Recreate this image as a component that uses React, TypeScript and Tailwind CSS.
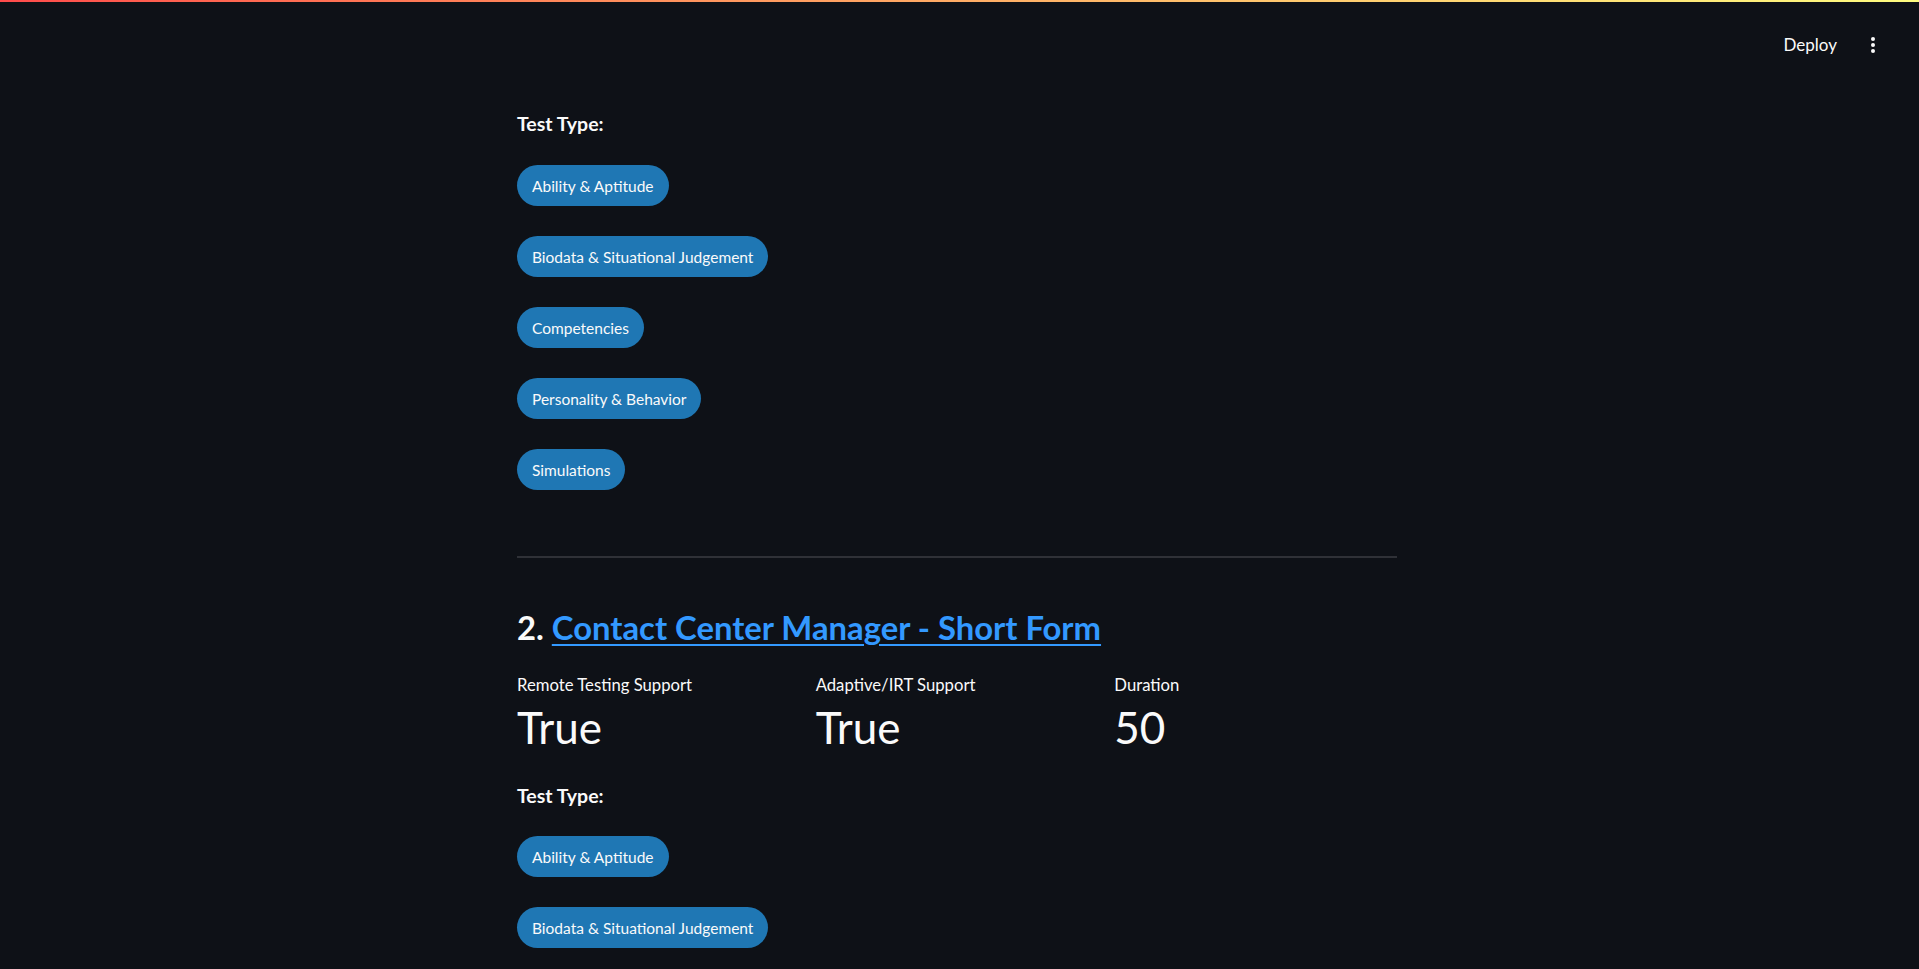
import React from "react";

const font = { fontFamily: "Lato, 'Noto Sans', sans-serif" };

function Pill({ label }: { label: string }) {
  return (
    <div className="h-[41px] px-[15px] pt-[2px] rounded-full bg-[#1f77b4] flex items-center text-[15.5px] text-[#fafafa] leading-none whitespace-nowrap">
      {label}
    </div>
  );
}

function TestTypes({ items, tight }: { items: string[]; tight?: boolean }) {
  return (
    <>
      <div className="h-[30px] leading-[30px] text-[19.5px] font-bold text-[#fafafa]">Test Type:</div>
      <div className={tight ? "flex flex-col items-start gap-[30px] mt-[25px]" : "flex flex-col items-start gap-[30px] mt-[26px]"}>
        {items.map((i) => (
          <Pill key={i} label={i} />
        ))}
      </div>
    </>
  );
}

function Metric({ label, value }: { label: string; value: string }) {
  return (
    <div className="flex flex-col">
      <div className="h-[24px] leading-[24px] text-[16.7px] text-[#fafafa]">{label}</div>
      <div className="h-[52px] leading-[52px] text-[44px] text-[#fafafa] mt-[4px]">{value}</div>
    </div>
  );
}

export default function App() {
  return (
    <div className="min-h-[969px] w-full bg-[#0e1117] overflow-hidden" style={font}>
      <div className="h-[2px] w-full bg-gradient-to-r from-[#ff4b4b] to-[#fffd80]" />
      <div className="h-[84px] flex justify-end items-start pr-[38px]">
        <div className="mt-[23px] h-[40px] flex items-center gap-[28px]">
          <span className="text-[17px] text-[#fafafa]">Deploy</span>
          <svg width="16" height="20" viewBox="0 0 16 20" fill="#fafafa">
            <circle cx="8" cy="4" r="2" />
            <circle cx="8" cy="10" r="2" />
            <circle cx="8" cy="16" r="2" />
          </svg>
        </div>
      </div>
      <div className="w-[880px] ml-[517px] flex flex-col">
        <div className="mt-[23px]">
          <TestTypes
            items={[
              "Ability & Aptitude",
              "Biodata & Situational Judgement",
              "Competencies",
              "Personality & Behavior",
              "Simulations",
            ]}
          />
        </div>
        <div className="mt-[66px] h-[2px] bg-[#2f3137]" />
        <div className="mt-[50px] h-[40px] leading-[40px] text-[32.8px] font-bold text-[#fafafa] whitespace-nowrap">
          2.{" "}
          <a href="#" className="text-[#3399ff] underline decoration-2 underline-offset-[4px]">
            Contact Center Manager - Short Form
          </a>
        </div>
        <div className="mt-[25px] grid grid-cols-3 gap-x-[16px]">
          <Metric label="Remote Testing Support" value="True" />
          <Metric label="Adaptive/IRT Support" value="True" />
          <Metric label="Duration" value="50" />
        </div>
        <div className="mt-[28px]">
          <TestTypes tight items={["Ability & Aptitude", "Biodata & Situational Judgement"]} />
        </div>
      </div>
    </div>
  );
}
